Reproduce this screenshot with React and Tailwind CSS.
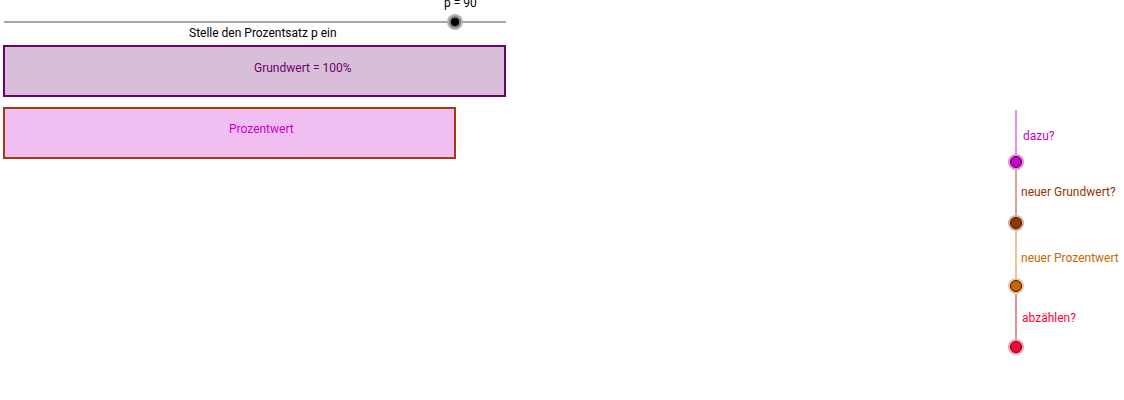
import React from "react";

const font = { fontFamily: "Roboto, 'Liberation Sans', sans-serif" };

// Steps of the vertical path on the right: line colour, label text and colour, point colours
const schritte = [
    { linie: "bg-[#ec8fec]", text: "dazu?", textFarbe: "text-[#cc00cc]", mt: "mt-[19px]", ml: "-ml-[1px]", hoehe: "h-[43px]", halo: "bg-[#cc00cc]/45", punkt: "bg-[#cc00cc]" },
    { linie: "bg-[#d6a890]", text: "neuer Grundwert?", textFarbe: "text-[#993300]", mt: "mt-[15px]", ml: "-ml-[3px]", hoehe: "h-[45px]", halo: "bg-[#993300]/40", punkt: "bg-[#993300]" },
    { linie: "bg-[#f0c494]", text: "neuer Prozentwert", textFarbe: "text-[#cc6600]", mt: "mt-[20px]", ml: "-ml-[3px]", hoehe: "h-[47px]", halo: "bg-[#cc6600]/40", punkt: "bg-[#cc6600]" },
    { linie: "bg-[#f08a9c]", text: "abzählen?", textFarbe: "text-[#ff0033]", mt: "mt-[17px]", ml: "-ml-[2px]", hoehe: "h-[45px]", halo: "bg-[#ff0033]/40", punkt: "bg-[#ff0033]" },
];

function Punkt({ halo, punkt }) {
    return (
        <div className={`w-[16px] h-[16px] rounded-full ${halo} flex items-center justify-center`}>
            <div className={`w-[12px] h-[12px] rounded-full ${punkt} border border-[#222]`}></div>
        </div>
    );
}

function Schieberegler() {
    return (
        <div className="relative h-[28px] ml-[4px] w-[502px]">
            <span className="absolute left-[440px] -top-[4px] text-[12px] leading-[14px] text-black">p = 90</span>
            <div className="absolute left-0 right-0 top-[21px] h-[2px] bg-[#a6a6a6]"></div>
            <div className="absolute left-[443px] top-[14px] w-[16px] h-[16px] rounded-full bg-[#b4b4b4] flex items-center justify-center">
                <div className="w-[12px] h-[12px] rounded-full bg-black border-2 border-[#7a7a7a]"></div>
            </div>
        </div>
    );
}

export default function App() {
    return (
        <div className="w-[1124px] h-[400px] bg-white flex overflow-hidden" style={font}>
            <div className="w-[510px] flex flex-col">
                <Schieberegler />
                <div className="pl-[189px] text-[12px] leading-[14px] text-black -mt-[2px]">Stelle den Prozentsatz p ein</div>
                <div className="ml-[3px] mt-[5px] w-[503px] h-[52px] border-2 border-[#6e006e] bg-[#d8bed8] pl-[249px] pt-[14px] text-[12px] leading-[14px] text-[#6e006e]">
                    Grundwert = 100%
                </div>
                <div className="ml-[3px] mt-[10px] w-[453px] h-[52px] border-2 border-[#a33a12] bg-[#f1bef1] pl-[224px] pt-[13px] text-[12px] leading-[14px] text-[#cc00cc]">
                    Prozentwert
                </div>
            </div>

            <div className="ml-[498px] pt-[110px] flex flex-col">
                {schritte.map((s, i) => (
                    <div key={s.text} className="flex flex-col">
                        <div className={`flex ${i === 0 ? "h-[44px]" : s.hoehe}`}>
                            <div className="w-[16px] flex justify-center shrink-0">
                                <div className={`w-[2px] h-full ${s.linie}`}></div>
                            </div>
                            <span className={`${s.mt} ${s.ml} text-[12px] leading-[14px] whitespace-nowrap ${s.textFarbe}`}>{s.text}</span>
                        </div>
                        <Punkt halo={s.halo} punkt={s.punkt} />
                    </div>
                ))}
            </div>
        </div>
    );
}
